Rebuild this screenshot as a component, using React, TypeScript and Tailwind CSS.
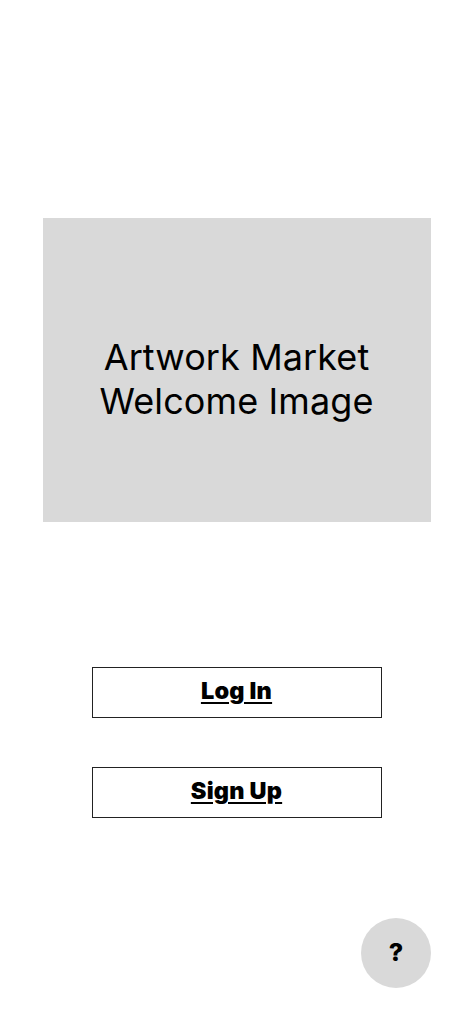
import React from 'react';

const App: React.FC = () => {
  return (
    <div className="w-[473px] h-[1024px] bg-white flex flex-col items-center font-['Inter',sans-serif] text-black">
      {/* Welcome image placeholder */}
      <div className="mt-[218px] w-[388px] h-[304px] bg-[#d9d9d9] flex items-center justify-center pt-[18px]">
        <div className="text-[36px] leading-[44px] text-center tracking-[0.1px]">
          Artwork Market
          <br />
          Welcome Image
        </div>
      </div>

      {/* Auth buttons */}
      <button className="mt-[145px] w-[290px] h-[51px] border border-[#222] flex items-center justify-center pb-[3px]">
        <span className="text-[23.5px] leading-[28px] font-black underline decoration-2 underline-offset-[3px] tracking-[0.2px]">Log In</span>
      </button>
      <button className="mt-[49px] w-[290px] h-[51px] border border-[#222] flex items-center justify-center pb-[3px]">
        <span className="text-[23.5px] leading-[28px] font-black underline decoration-2 underline-offset-[3px] tracking-[0.2px]">Sign Up</span>
      </button>

      {/* Help */}
      <div className="mt-[100px] w-full flex justify-end pr-[42px]">
        <button className="w-[70px] h-[70px] rounded-full bg-[#d9d9d9] flex items-center justify-center text-[25px] font-extrabold">
          ?
        </button>
      </div>
    </div>
  );
};

export default App;
